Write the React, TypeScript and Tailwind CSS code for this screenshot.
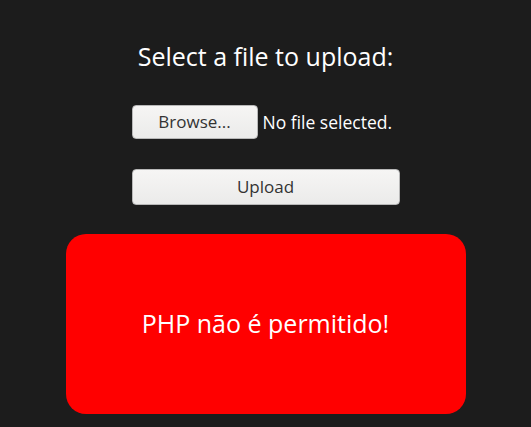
const App = () => {
  return (
    <div className="min-h-[427px] bg-[#1c1c1c] flex flex-col items-center font-['Open_Sans',sans-serif]">
      <h2 className="mt-[38px] text-[25px] leading-[36px] text-white">Select a file to upload:</h2>

      <div className="mt-[31px] flex items-center w-[268px]">
        <button className="h-[34px] w-[126px] shrink-0 rounded-[4px] border border-[#b8b8b8] bg-gradient-to-b from-[#f6f5f4] to-[#ebebea] text-[17px] text-[#333]">
          Browse...
        </button>
        <span className="ml-[5px] whitespace-nowrap text-[17.5px] text-white">No file selected.</span>
      </div>

      <button className="mt-[30px] h-[36px] w-[268px] rounded-[4px] border border-[#b8b8b8] bg-gradient-to-b from-[#f6f5f4] to-[#ebebea] text-[17px] text-[#333]">
        Upload
      </button>

      <div className="mt-[29px] flex h-[180px] w-[400px] items-center justify-center rounded-[20px] bg-[#ff0000]">
        <span className="text-[25px] text-white">PHP não é permitido!</span>
      </div>
    </div>
  );
};

export default App;
